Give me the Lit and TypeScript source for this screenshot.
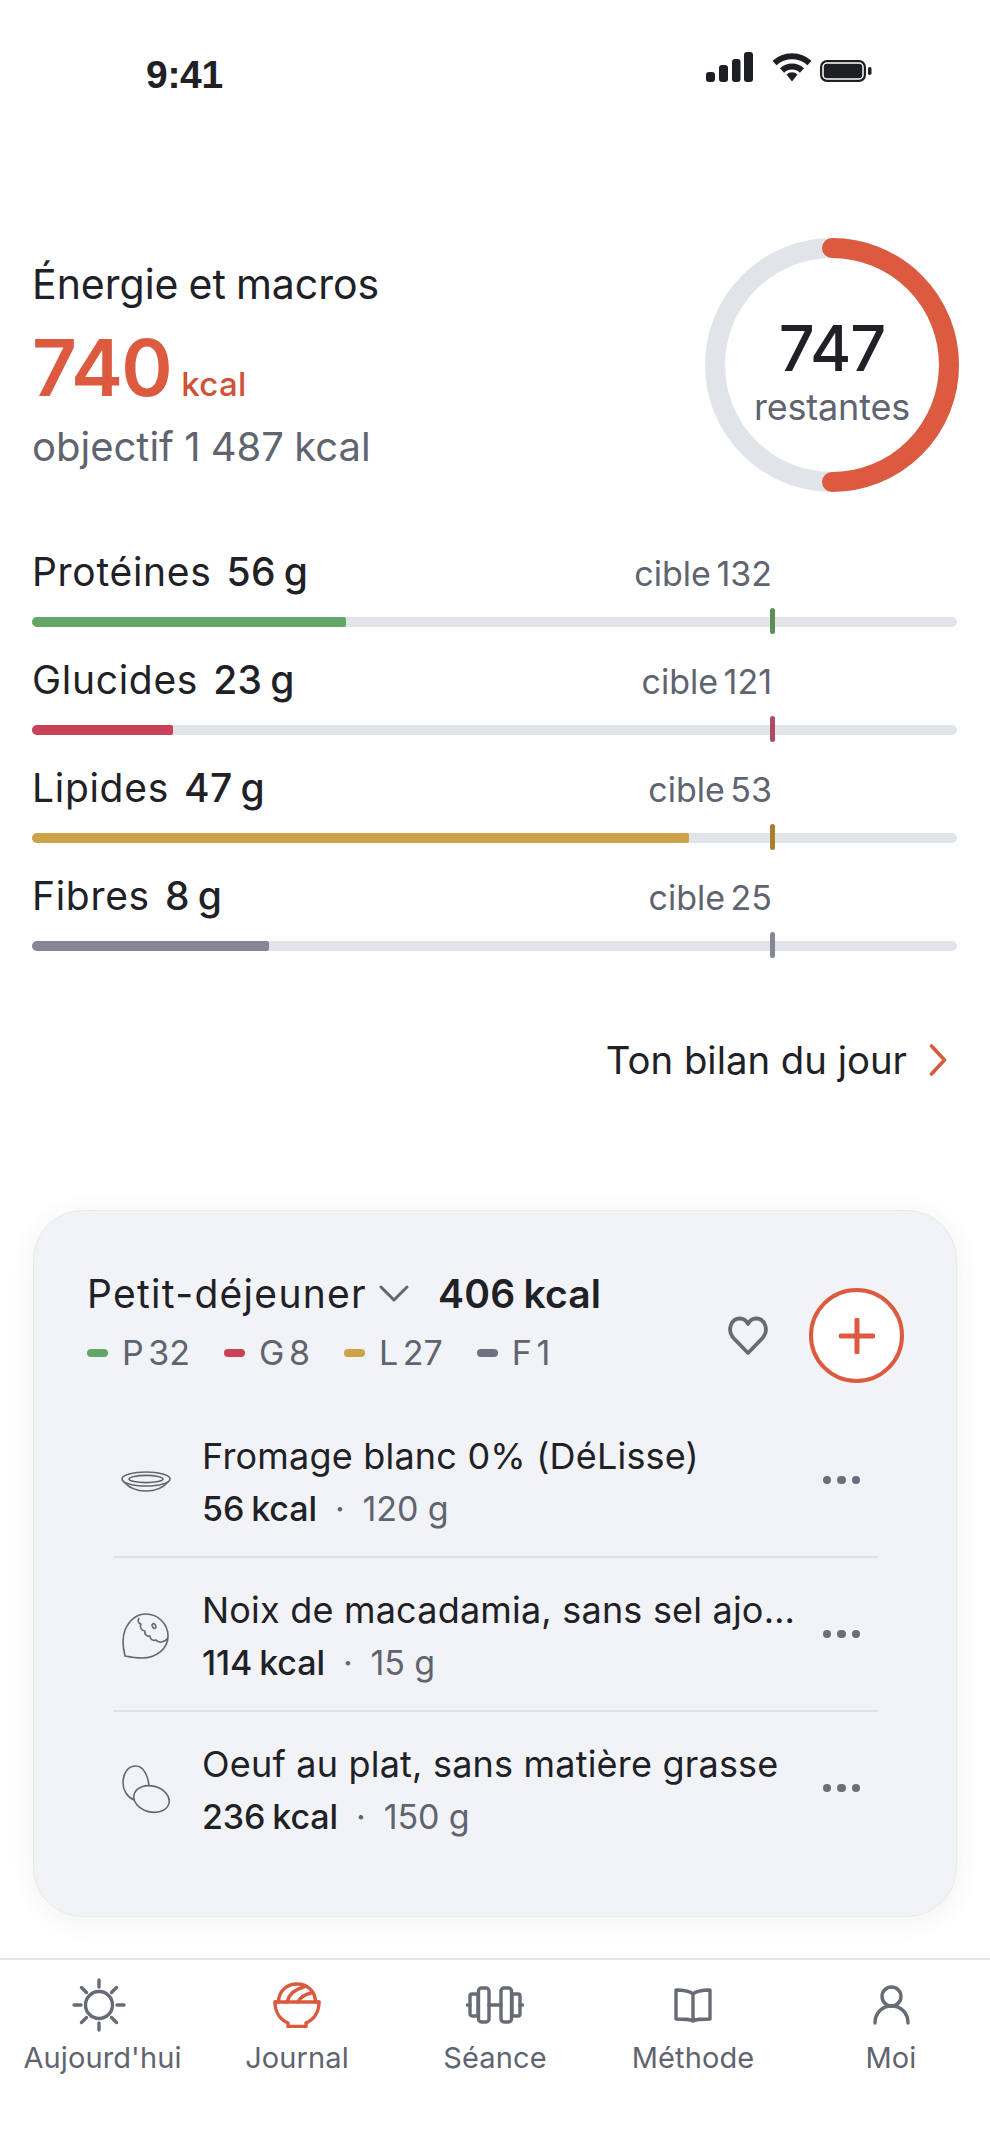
import { LitElement, html, css, svg } from "lit";
import { customElement } from "lit/decorators.js";

const macros = [
  { name: "Protéines", value: 56, target: 132, color: "#64A568", mark: "#5C8F54" },
  { name: "Glucides", value: 23, target: 121, color: "#C94258", mark: "#AE4A68" },
  { name: "Lipides", value: 47, target: 53, color: "#CDA348", mark: "#A97F2E" },
  { name: "Fibres", value: 8, target: 25, color: "#858894", mark: "#858894" },
];
const TARGET_AT = 80.1;

const legend = [
  { label: "P 32", color: "#64A568" },
  { label: "G 8", color: "#C94258" },
  { label: "L 27", color: "#CDA348" },
  { label: "F 1", color: "#6E7280" },
];

const plate = svg`<svg class="food" width="50" height="22" viewBox="0 0 50 22" fill="none" stroke="#63676F" stroke-width="1.6"><ellipse cx="25" cy="8" rx="24" ry="7"/><ellipse cx="25" cy="8" rx="17" ry="3.6"/><path d="M3 11C8 17 15 20 25 20S42 17 47 11"/></svg>`;
const nut = svg`<svg class="food" width="48" height="47" viewBox="0 0 48 47" fill="none" stroke="#63676F" stroke-width="1.6" stroke-linejoin="round"><path d="M3 43C1 35 0 25 3 17C8 6 16 1 24 1C36 1 46 11 46 23C46 36 34 45 20 45C14 45 8 44 3 43Z"/><path d="M17 5c-2 3 0 6 2 6c-2 3 1 7 4 7c-1 4 3 6 5 5c0 4 4 5 6 4c2 3 8 3 12-2"/><ellipse cx="32" cy="13" rx="1.6" ry="2.4" transform="rotate(-30 32 13)"/></svg>`;
const eggs = svg`<svg class="food" width="48" height="50" viewBox="0 0 48 50" fill="none" stroke="#63676F" stroke-width="1.6"><ellipse cx="29.5" cy="34" rx="18" ry="13" transform="rotate(14 29.5 34)"/><path d="M12 35C5 32 1 25 1 18C1 8 6 1 14 1C21 1 26 10 27 21"/></svg>`;

const foods = [
  { icon: plate, name: "Fromage blanc 0% (DéLisse)", kcal: "56 kcal", qty: "120 g" },
  { icon: nut, name: "Noix de macadamia, sans sel ajo…", kcal: "114 kcal", qty: "15 g" },
  { icon: eggs, name: "Oeuf au plat, sans matière grasse", kcal: "236 kcal", qty: "150 g" },
];

const tabs = [
  { label: "Aujourd'hui", icon: svg`<svg width="54" height="54" viewBox="0 0 54 54" fill="none" stroke="#676B76" stroke-width="3.4" stroke-linecap="round"><circle cx="27" cy="27" r="13.5"/><path d="M27 2v7M27 45v7M2 27h7M45 27h7M9.5 9.5l5 5M39.5 39.5l5 5M44.5 9.5l-5 5M14.5 39.5l-5 5"/></svg>` },
  { label: "Journal", icon: svg`<svg width="48" height="46" viewBox="0 0 48 46" fill="none" stroke="#DB5A3E" stroke-width="3.4" stroke-linecap="round" stroke-linejoin="round"><path d="M2 20H46"/><path d="M2 20C2 31 8 38 15 41V44.5H33V41C40 38 46 31 46 20"/><path d="M5.5 20C5.5 9 14 2 24 2S42.5 9 42.5 20"/><path d="M14 20C16 13 22 7 31 5"/><path d="M25 20C27 16 31 12.500 38 11"/></svg>` },
  { label: "Séance", icon: svg`<svg width="58" height="38" viewBox="0 0 58 38" fill="none" stroke="#676B76" stroke-width="3.4" stroke-linecap="round" stroke-linejoin="round"><path d="M1.500 19H4M56.500 19H54M23 19H35"/><rect x="4" y="8" width="8" height="22" rx="2"/><rect x="12.500" y="2" width="10.500" height="34" rx="3"/><rect x="35" y="2" width="10.500" height="34" rx="3"/><rect x="46" y="8" width="8" height="22" rx="2"/></svg>` },
  { label: "Méthode", icon: svg`<svg width="38" height="35" viewBox="0 0 38 35" fill="none" stroke="#676B76" stroke-width="3.4" stroke-linecap="round" stroke-linejoin="round"><path d="M19 6C16 3 12 2 2 2V31C12 31 16 31 19 33C22 31 26 31 36 31V2C26 2 22 3 19 6V33"/></svg>` },
  { label: "Moi", icon: svg`<svg width="37" height="40" viewBox="0 0 37 40" fill="none" stroke="#676B76" stroke-width="3.4" stroke-linecap="round"><circle cx="18.500" cy="11.500" r="9.500"/><path d="M2 38C2 28 9 21 18.500 21S35 28 35 38"/></svg>` },
];

@customElement("app-root")
export class AppRoot extends LitElement {
  static styles = css`
    :host {
      display: flex;
      flex-direction: column;
      width: 990px;
      height: 2151px;
      background: #fff;
      color: #1f2126;
      font-family: Inter, "Liberation Sans", sans-serif;
      overflow: hidden;
    }
    .status {
      height: 110px;
      flex: none;
      display: flex;
      justify-content: space-between;
      padding: 0 118px 0 146px;
      box-sizing: border-box;
    }
    .clock {
      font-family: "Liberation Sans", sans-serif;
      font-weight: 700;
      font-size: 39px;
      line-height: 44px;
      margin-top: 53px;
      letter-spacing: -0.3px;
    }
    .glyphs {
      display: flex;
      gap: 8px;
      padding-top: 52px;
      align-items: flex-start;
    }
    .signal {
      margin-right: 11px;
    }
    .battery {
      margin-top: 7px;
    }
    .summary {
      margin-top: 128px;
      padding: 0 31px 0 32px;
      display: flex;
      justify-content: space-between;
      height: 254px;
      flex: none;
    }
    .totals {
      display: flex;
      flex-direction: column;
      padding-top: 22px;
    }
    .title {
      font-size: 41px;
      line-height: 48px;
      font-weight: 400;
      word-spacing: -1.5px;
    }
    .big {
      margin-top: 20px;
      line-height: 80px;
      color: #dc5a3f;
      font-size: 78px;
      font-weight: 600;
      letter-spacing: -1.5px;
    }
    .big span {
      font-size: 33px;
      font-weight: 500;
      letter-spacing: 0.3px;
      margin-left: 10px;
      color: #cf5136;
    }
    .goal {
      margin-top: 0;
      font-size: 40px;
      line-height: 46px;
      color: #5f6470;
      word-spacing: -1px;
    }
    .ring {
      position: relative;
      width: 254px;
      height: 254px;
      display: flex;
      flex-direction: column;
      align-items: center;
    }
    .ring svg {
      position: absolute;
      inset: 0;
    }
    .remain {
      font-size: 63px;
      line-height: 70px;
      font-weight: 500;
      margin-top: 75px;
      letter-spacing: -1px;
    }
    .remain-l {
      margin-top: 3px;
      font-size: 36px;
      line-height: 42px;
      color: #5f6470;
      letter-spacing: -0.2px;
    }
    .macros {
      margin-top: 57px;
      padding: 0 33px 0 32px;
      display: flex;
      flex-direction: column;
      gap: 30px;
      flex: none;
    }
    .mhead {
      display: flex;
      justify-content: space-between;
      align-items: baseline;
      width: 80%;
      height: 46px;
      line-height: 46px;
      margin-bottom: 22px;
    }
    .mname {
      font-size: 39px;
      letter-spacing: 0.7px;
    }
    .mname b {
      font-weight: 500;
      margin-left: 15px;
      letter-spacing: 0.4px;
      word-spacing: -3px;
    }
    .mtarget {
      font-size: 34px;
      color: #5f6470;
      word-spacing: -4px;
    }
    .track {
      position: relative;
      height: 10px;
      border-radius: 5px;
      background: #e1e4e9;
    }
    .fill {
      height: 100%;
      border-radius: 5px 2px 2px 5px;
    }
    .mark {
      position: absolute;
      top: -9px;
      width: 5px;
      height: 26px;
      margin-left: -2.5px;
      border-radius: 2.5px;
    }
    .link {
      margin-top: 87px;
      padding-right: 43px;
      display: flex;
      justify-content: flex-end;
      align-items: center;
      gap: 22px;
      font-size: 38.3px;
      line-height: 44px;
      font-weight: 400;
      flex: none;
    }
    .card {
      margin: 128px 33px 0 33px;
      height: 707px;
      box-sizing: border-box;
      flex: none;
      background: #f1f3f7;
      border: 1px solid #e8eaee;
      border-radius: 50px;
      box-shadow: 0 4px 26px rgba(40, 50, 70, 0.07);
      padding: 60px 52px 0 53px;
    }
    .chead {
      display: flex;
      justify-content: space-between;
      align-items: flex-start;
    }
    .cline {
      display: flex;
      align-items: center;
      height: 44px;
      font-size: 39px;
      font-weight: 400;
      letter-spacing: 1.3px;
      white-space: nowrap;
    }
    .cline svg {
      margin-left: 12px;
    }
    .cline b {
      margin-left: 29px;
      font-weight: 600;
      letter-spacing: 0.2px;
      word-spacing: -2px;
    }
    .legend {
      margin-top: 18px;
      display: flex;
      gap: 34px;
      font-size: 34px;
      line-height: 40px;
      color: #5f6470;
      word-spacing: -5px;
    }
    .legend div {
      display: flex;
      align-items: center;
      gap: 14px;
    }
    .legend i {
      width: 21px;
      height: 8px;
      border-radius: 4px;
    }
    .actions {
      display: flex;
      align-items: center;
      gap: 41px;
      padding-top: 17px;
    }
    .add {
      width: 95px;
      height: 95px;
      box-sizing: border-box;
      border-radius: 50%;
      border: 4px solid #dc5a3f;
      background: #fff;
      display: flex;
      align-items: center;
      justify-content: center;
    }
    .items {
      margin: 21px 26px 0 26px;
    }
    .item {
      display: flex;
      align-items: center;
      padding: 31px 18px 27px 8px;
      border-bottom: 2px solid #dfe2e7;
    }
    .item:last-child {
      border-bottom: 0;
    }
    .iconbox {
      width: 50px;
      flex: none;
      display: flex;
      justify-content: center;
      margin-right: 31px;
    }
    .itext {
      flex: 1;
      min-width: 0;
      display: flex;
      flex-direction: column;
      gap: 12px;
    }
    .iname {
      font-size: 36px;
      line-height: 42px;
      white-space: nowrap;
      letter-spacing: 0.2px;
    }
    .isub {
      font-size: 34px;
      line-height: 40px;
      color: #5f6470;
      display: flex;
      letter-spacing: -0.1px;
    }
    .isub b {
      color: #1f2126;
      font-weight: 500;
      word-spacing: -2px;
    }
    .isub span {
      margin: 0 18px;
    }
    .more {
      display: flex;
      gap: 6px;
      flex: none;
      margin-bottom: 4px;
    }
    .more i {
      width: 8.5px;
      height: 8.5px;
      border-radius: 50%;
      background: #6b6f7a;
    }
    nav {
      margin-top: auto;
      height: 193px;
      box-sizing: border-box;
      flex: none;
      border-top: 2px solid #e1e4e9;
      padding-top: 15px;
      display: grid;
      grid-template-columns: repeat(5, 1fr);
    }
    .tab {
      display: flex;
      flex-direction: column;
      align-items: center;
    }
    .ticon {
      height: 60px;
      display: flex;
      align-items: center;
      justify-content: center;
      margin-bottom: 5px;
    }
    .tlabel {
      font-size: 29px;
      line-height: 36px;
      color: #5f6470;
      letter-spacing: 0.1px;
    }
    .tab:first-child .tlabel {
      margin-left: 7px;
    }
  `;

  render() {
    return html`
      <div class="status">
        <div class="clock">9:41</div>
        <div class="glyphs">
          <svg class="signal" width="47" height="30" viewBox="0 0 47 30" fill="#1d1f24">
            <rect x="0" y="20" width="9" height="10" rx="3"/>
            <rect x="13" y="13" width="9" height="17" rx="3"/>
            <rect x="26" y="7" width="8.500" height="23" rx="3"/>
            <rect x="38" y="0" width="9" height="30" rx="3"/>
          </svg>
          <svg width="40" height="30" viewBox="0 0 40 30" fill="none" stroke="#1d1f24" stroke-width="6">
            <path d="M2.500 11A26 26 0 0 1 37.500 11"/>
            <path d="M10 18.500A14.500 14.500 0 0 1 30 18.500"/>
            <path d="M14.500 22.500A8 8 0 0 1 25.500 22.500L20 29.500Z" fill="#1d1f24" stroke="none"/>
          </svg>
          <svg class="battery" width="52" height="24" viewBox="0 0 52 24">
            <rect x="0" y="1" width="46" height="22" rx="7" fill="#1d1f24"/>
            <rect x="3" y="4" width="40" height="16" rx="4" fill="#1d1f24" stroke="#fff" stroke-width="1.500"/>
            <rect x="48" y="8" width="3.500" height="8" rx="1.700" fill="#1d1f24"/>
          </svg>
        </div>
      </div>

      <section class="summary">
        <div class="totals">
          <div class="title">Énergie et macros</div>
          <div class="big">740<span>kcal</span></div>
          <div class="goal">objectif 1 487 kcal</div>
        </div>
        <div class="ring">
          <svg width="254" height="254" viewBox="0 0 254 254" fill="none" stroke-width="20">
            <circle cx="127" cy="127" r="117" stroke="#e1e4e9"/>
            <path d="M127 10A117 117 0 0 1 127 244" stroke="#dc5a3f" stroke-linecap="round"/>
          </svg>
          <div class="remain">747</div>
          <div class="remain-l">restantes</div>
        </div>
      </section>

      <section class="macros">
        ${macros.map(
          (m) => html`
            <div>
              <div class="mhead">
                <div class="mname">${m.name}<b>${m.value} g</b></div>
                <div class="mtarget">cible ${m.target}</div>
              </div>
              <div class="track">
                <div class="fill" style="width:${(m.value / m.target) * TARGET_AT}%;background:${m.color}"></div>
                <div class="mark" style="left:${TARGET_AT}%;background:${m.mark}"></div>
              </div>
            </div>
          `
        )}
      </section>

      <div class="link">
        <span>Ton bilan du jour</span>
        <svg width="18" height="32" viewBox="0 0 18 32" fill="none" stroke="#d65c3c" stroke-width="3.600" stroke-linecap="round" stroke-linejoin="round"><path d="M2.500 2L15.500 16L2.500 30"/></svg>
      </div>

      <section class="card">
        <div class="chead">
          <div>
            <div class="cline">
              Petit-déjeuner
              <svg width="30" height="17" viewBox="0 0 30 17" fill="none" stroke="#63676F" stroke-width="3" stroke-linecap="round" stroke-linejoin="round"><path d="M2 2L15 15L28 2"/></svg>
              <b>406 kcal</b>
            </div>
            <div class="legend">
              ${legend.map((l) => html`<div><i style="background:${l.color}"></i>${l.label}</div>`)}
            </div>
          </div>
          <div class="actions">
            <svg width="40" height="40" viewBox="0 0 40 40" fill="none" stroke="#676B76" stroke-width="3.800" stroke-linejoin="round"><path d="M20 37L5 21.500C-1 14 3 2.500 12 2.500C16 2.500 18.500 5 20 8C21.500 5 24 2.500 28 2.500C37 2.500 41 14 35 21.500Z"/></svg>
            <div class="add">
              <svg width="36" height="36" viewBox="0 0 36 36" stroke="#dc5a3f" stroke-width="5" stroke-linecap="round"><path d="M18 2V34M2 18H34"/></svg>
            </div>
          </div>
        </div>
        <div class="items">
          ${foods.map(
            (f) => html`
              <div class="item">
                <div class="iconbox">${f.icon}</div>
                <div class="itext">
                  <div class="iname">${f.name}</div>
                  <div class="isub"><b>${f.kcal}</b><span>·</span>${f.qty}</div>
                </div>
                <div class="more"><i></i><i></i><i></i></div>
              </div>
            `
          )}
        </div>
      </section>

      <nav>
        ${tabs.map(
          (t) => html`
            <div class="tab">
              <div class="ticon">${t.icon}</div>
              <div class="tlabel">${t.label}</div>
            </div>
          `
        )}
      </nav>
    `;
  }
}
